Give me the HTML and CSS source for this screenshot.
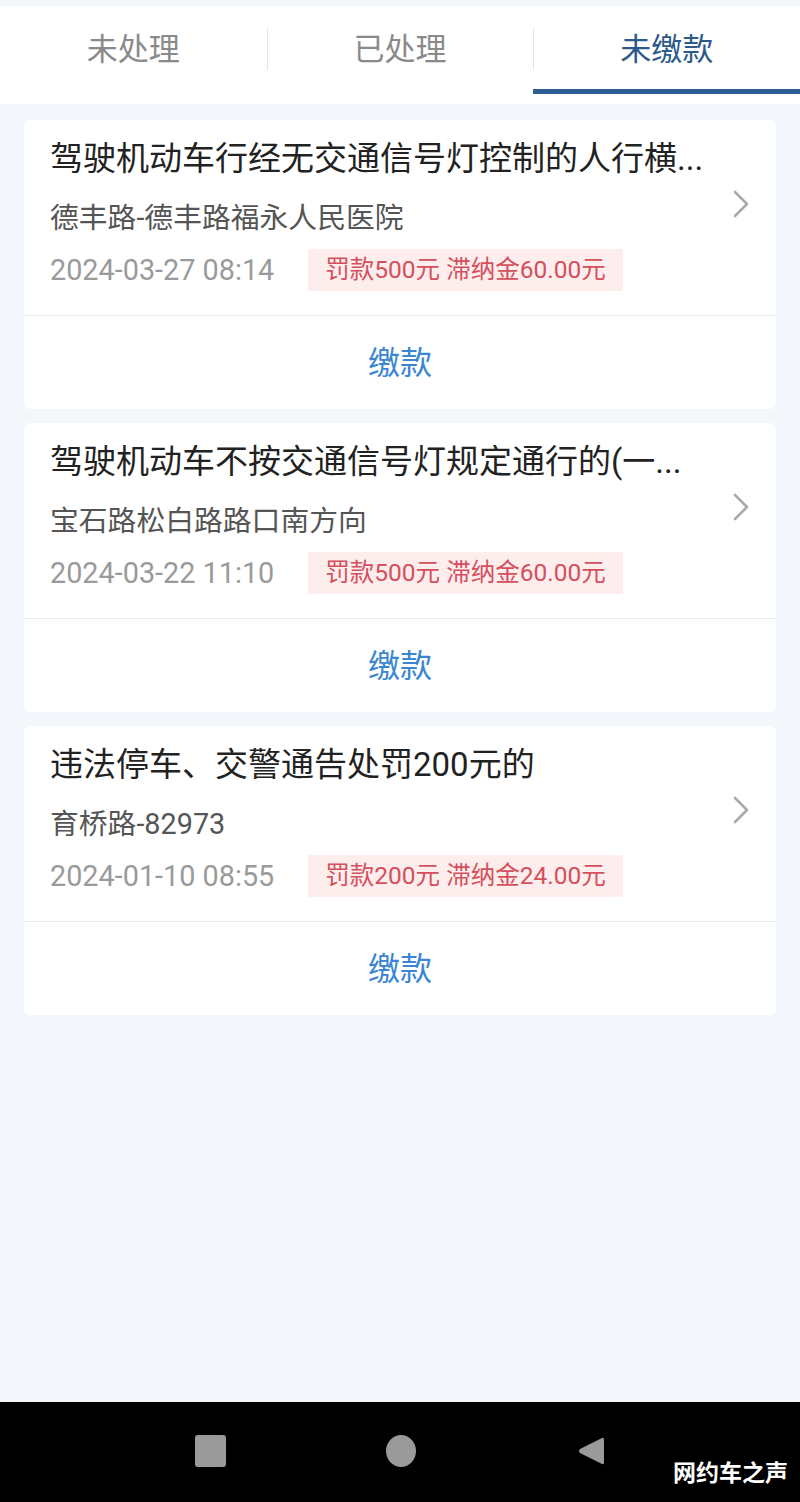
FILE: index.html
```html
<!DOCTYPE html>
<html lang="zh">
<head>
<meta charset="utf-8">
<link rel="stylesheet" href="styles.css">
</head>
<body>
<div class="screen">
  <div class="tabs">
    <div class="tab">未处理</div>
    <div class="tab">已处理</div>
    <div class="tab active">未缴款</div>
  </div>

  <div class="list">
    <div class="card">
      <div class="card-main">
        <div class="info">
          <div class="title">驾驶机动车行经无交通信号灯控制的人行横...</div>
          <div class="place">德丰路-德丰路福永人民医院</div>
          <div class="meta">
            <span class="date">2024-03-27 08:14</span>
            <span class="fine">罚款500元 滞纳金60.00元</span>
          </div>
        </div>
        <svg class="chev" viewBox="0 0 18 30" width="18" height="30"><path d="M3 3 L15 15 L3 27" fill="none" stroke="#a9a9a9" stroke-width="2.6" stroke-linecap="round" stroke-linejoin="round"/></svg>
      </div>
      <div class="pay">缴款</div>
    </div>

    <div class="card">
      <div class="card-main">
        <div class="info">
          <div class="title">驾驶机动车不按交通信号灯规定通行的(一...</div>
          <div class="place">宝石路松白路路口南方向</div>
          <div class="meta">
            <span class="date">2024-03-22 11:10</span>
            <span class="fine">罚款500元 滞纳金60.00元</span>
          </div>
        </div>
        <svg class="chev" viewBox="0 0 18 30" width="18" height="30"><path d="M3 3 L15 15 L3 27" fill="none" stroke="#a9a9a9" stroke-width="2.6" stroke-linecap="round" stroke-linejoin="round"/></svg>
      </div>
      <div class="pay">缴款</div>
    </div>

    <div class="card">
      <div class="card-main">
        <div class="info">
          <div class="title">违法停车、交警通告处罚200元的</div>
          <div class="place">育桥路-82973</div>
          <div class="meta">
            <span class="date">2024-01-10 08:55</span>
            <span class="fine">罚款200元 滞纳金24.00元</span>
          </div>
        </div>
        <svg class="chev" viewBox="0 0 18 30" width="18" height="30"><path d="M3 3 L15 15 L3 27" fill="none" stroke="#a9a9a9" stroke-width="2.6" stroke-linecap="round" stroke-linejoin="round"/></svg>
      </div>
      <div class="pay">缴款</div>
    </div>
  </div>

  <div class="spacer"></div>

  <div class="navbar">
    <div class="nav-square"></div>
    <div class="nav-circle"></div>
    <svg class="nav-back" viewBox="0 0 30 32" width="30" height="32"><path d="M26 3 Q28 2 28 5 L28 27 Q28 30 26 29 L4 18 Q2 16 4 14 Z" fill="#9a9a9a"/></svg>
    <div class="watermark">网约车之声</div>
  </div>
</div>
</body>
</html>
```

FILE: styles.css
```css
* { box-sizing: border-box; }
html, body {
  margin: 0;
  padding: 0;
  background: #f3f6fa;
}
body {
  font-family: Roboto, "Noto Sans CJK SC", sans-serif;
}
.screen {
  width: 800px;
  height: 1502px;
  display: flex;
  flex-direction: column;
  padding-top: 6px;
}
.tabs {
  display: flex;
  height: 98px;
  background: #fff;
}
.tab {
  flex: 1;
  display: flex;
  align-items: center;
  justify-content: center;
  padding-bottom: 18px;
  font-size: 31px;
  color: #8a8a8a;
  position: relative;
}
.tab + .tab::before {
  content: "";
  position: absolute;
  left: 0;
  top: 22px;
  height: 42px;
  width: 1px;
  background: #e6e6e6;
}
.tab.active {
  color: #2c5a8a;
}
.tab.active::after {
  content: "";
  position: absolute;
  left: 0;
  right: 0;
  bottom: 10px;
  height: 5px;
  background: #2f5f92;
}
.list {
  display: flex;
  flex-direction: column;
  gap: 14px;
  padding: 16px 24px 0;
}
.card {
  background: #fff;
  border-radius: 6px;
  display: flex;
  flex-direction: column;
}
.card-main {
  display: flex;
  align-items: center;
  padding: 20px 26px 24px 26px;
  border-bottom: 1px solid #ececec;
  gap: 20px;
}
.info {
  flex: 1;
  min-width: 0;
  display: flex;
  flex-direction: column;
}
.title {
  font-size: 33px;
  line-height: 38px;
  color: #222;
  white-space: nowrap;
}
.place {
  margin-top: 23px;
  font-size: 28.8px;
  line-height: 34px;
  color: #555;
}
.meta {
  margin-top: 14px;
  display: flex;
  align-items: center;
  gap: 34px;
}
.date {
  font-size: 28.8px;
  line-height: 42px;
  color: #9a9a9a;
}
.fine {
  background: #fdeded;
  color: #d4505c;
  font-size: 24.5px;
  line-height: 42px;
  padding: 0 17px;
}
.chev {
  flex: none;
  margin-bottom: 24px;
}
.pay {
  height: 93px;
  display: flex;
  align-items: center;
  justify-content: center;
  padding-bottom: 5px;
  font-size: 32px;
  color: #3a86d1;
}
.spacer {
  flex: 1;
}
.navbar {
  height: 100px;
  background: #000;
  position: relative;
  display: flex;
  align-items: center;
  justify-content: center;
  gap: 160px;
  padding-bottom: 2px;
}
.nav-square {
  width: 31px;
  height: 32px;
  border-radius: 3px;
  background: #9a9a9a;
}
.nav-circle {
  width: 30px;
  height: 32px;
  border-radius: 50%;
  background: #9a9a9a;
}
.nav-back {
  display: block;
}
.watermark {
  position: absolute;
  right: 12px;
  bottom: 14px;
  color: #fff;
  font-size: 23px;
  font-weight: 700;
  font-family: "Noto Sans CJK SC", sans-serif;
}
```
